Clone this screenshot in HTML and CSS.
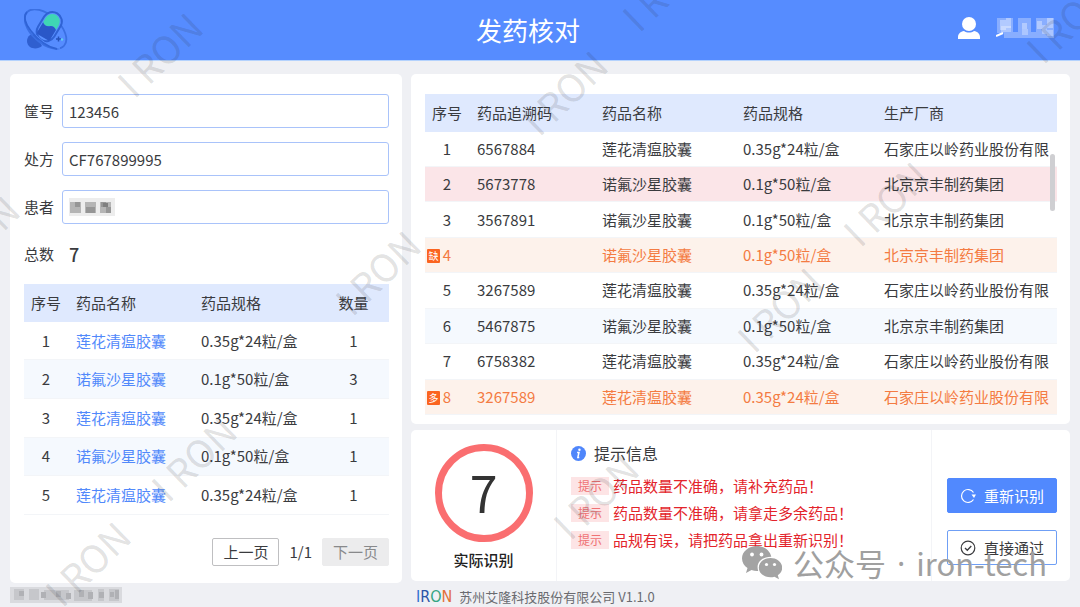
FILE: index.html
```html
<!DOCTYPE html>
<html lang="zh-CN">
<head>
<meta charset="utf-8">
<title>发药核对</title>
<link rel="stylesheet" href="styles.css">
</head>
<body>
<header class="topbar">
  <div class="brand">
    <svg class="brand-icon" viewBox="24 8 44 42" aria-hidden="true">
      <path d="M30 34c-4 3-4 9 0 12 4 2.500 9 1.500 12-1l-7-12z" fill="#2f5fd0"/>
      <ellipse cx="45.500" cy="28" rx="25" ry="14" transform="rotate(42 45.500 28)" fill="none" stroke="#3a6fe2" stroke-width="1.800"/>
      <g transform="rotate(31 49 26)">
        <rect x="38.500" y="9" width="21" height="33" rx="10.500" fill="#2f62d4"/>
        <rect x="40.500" y="11" width="17" height="29" rx="8.500" fill="#5a90ff"/>
        <path d="M41.500 25v-5.500a7.500 7.500 0 0 1 15 0V25q-4-3-7.500 0t-7.500 0z" fill="#3fd6b4"/>
        <path d="M41.500 25q4 3 7.500 0t7.500 0v11q0 2-2 2h-11q-2 0-2-2z" fill="#2a57c8"/>
      </g>
      <path d="M26 19c2 8 8 15 15 20 6 5 13 8 19 8" fill="none" stroke="#5a90ff" stroke-width="1.500"/>
      <path d="M27 11c-4 4-2 12 4 19 7 9 17 16 26 18" fill="none" stroke="#2f63d6" stroke-width="1.800"/>
      <path d="M58.500 35.500v5M56 38h5" stroke="#2450b8" stroke-width="1.500"/>
      <circle cx="62" cy="38.500" r="1.200" fill="#5fd0f0"/>
    </svg>
  </div>
  <h1 class="title">发药核对</h1>
  <div class="user">
    <svg class="user-icon" viewBox="0 0 22 22" aria-hidden="true"><circle cx="11" cy="7" r="7" fill="#fff"/><path d="M0 22v-2c0-3 2.500-5.500 6-6 3 2 7 2 10 0 3.500.5 6 3 6 6v2z" fill="#fff"/></svg>
    <svg class="user-mask" viewBox="0 0 60 22" aria-hidden="true">
      <path d="M0 19l7-3" stroke="#fff" stroke-width="2"/>
      <g fill="#fff">
        <path opacity=".3" d="M1 1h16v15H1zM22 1h13v18H22zM40 1h18v20H8v-6h32z"/>
        <path opacity=".35" d="M4 3h6v10H4zM10 1h5v10h-5zM26 6h5v6h-5zM41 4h5v8h-5zM51 1h6v10h-6z"/>
        <path opacity=".3" d="M5 9h10v6H5zM26 12h6v6h-6zM46 8h5v9h-5zM51 13h6v6h-6z"/>
      </g>
    </svg>
  </div>
</header>

<main class="layout">
  <section class="card order">
    <div class="field"><label for="basket">筐号</label><input id="basket" type="text" value="123456"></div>
    <div class="field"><label for="rx">处方</label><input id="rx" type="text" value="CF767899995"></div>
    <div class="field">
      <label for="patient">患者</label><input id="patient" type="text">
      <svg class="patient-mask" viewBox="0 0 48 20" aria-hidden="true">
        <path fill="#ededed" d="M0 0h46v18H0z"/>
        <path fill="#b5b5b5" d="M1 4h11v11H1zM16 4h11v11H16zM31 4h11v11H31z"/>
        <path fill="#969696" d="M6 4h5v5H6zM17 9h9v6h-9zM32 4h5v5h-5zM37 9h5v6h-5z"/>
        <path fill="#7f7f7f" d="M34 5h5v4h-5z"/>
      </svg>
    </div>
    <div class="field total"><span>总数</span><strong>7</strong></div>

    <table class="grid order-grid">
      <colgroup><col class="c-no"><col class="c-code"><col class="c-code"><col></colgroup>
      <thead><tr><th class="mid">序号</th><th>药品名称</th><th>药品规格</th><th class="mid">数量</th></tr></thead>
      <tbody>
        <tr><td class="mid">1</td><td><a href="#">莲花清瘟胶囊</a></td><td>0.35g*24粒/盒</td><td class="mid">1</td></tr>
        <tr class="alt"><td class="mid">2</td><td><a href="#">诺氟沙星胶囊</a></td><td>0.1g*50粒/盒</td><td class="mid">3</td></tr>
        <tr><td class="mid">3</td><td><a href="#">莲花清瘟胶囊</a></td><td>0.35g*24粒/盒</td><td class="mid">1</td></tr>
        <tr class="alt"><td class="mid">4</td><td><a href="#">诺氟沙星胶囊</a></td><td>0.1g*50粒/盒</td><td class="mid">1</td></tr>
        <tr><td class="mid">5</td><td><a href="#">莲花清瘟胶囊</a></td><td>0.35g*24粒/盒</td><td class="mid">1</td></tr>
      </tbody>
    </table>
    <nav class="pager"><button type="button">上一页</button><span>1/1</span><button type="button" disabled>下一页</button></nav>
  </section>

  <div class="right">
    <section class="card scan">
      <table class="grid scan-grid">
        <colgroup><col class="c-no"><col class="c-code"><col class="c-name"><col class="c-name"><col></colgroup>
        <thead><tr><th class="mid">序号</th><th>药品追溯码</th><th>药品名称</th><th>药品规格</th><th>生产厂商</th></tr></thead>
        <tbody>
          <tr><td class="mid">1</td><td>6567884</td><td>莲花清瘟胶囊</td><td>0.35g*24粒/盒</td><td>石家庄以岭药业股份有限</td></tr>
          <tr class="error"><td class="mid">2</td><td>5673778</td><td>诺氟沙星胶囊</td><td>0.1g*50粒/盒</td><td>北京京丰制药集团</td></tr>
          <tr><td class="mid">3</td><td>3567891</td><td>诺氟沙星胶囊</td><td>0.1g*50粒/盒</td><td>北京京丰制药集团</td></tr>
          <tr class="warn"><td class="mid"><span class="badge">缺</span>4</td><td></td><td>诺氟沙星胶囊</td><td>0.1g*50粒/盒</td><td>北京京丰制药集团</td></tr>
          <tr><td class="mid">5</td><td>3267589</td><td>莲花清瘟胶囊</td><td>0.35g*24粒/盒</td><td>石家庄以岭药业股份有限</td></tr>
          <tr class="alt"><td class="mid">6</td><td>5467875</td><td>诺氟沙星胶囊</td><td>0.1g*50粒/盒</td><td>北京京丰制药集团</td></tr>
          <tr><td class="mid">7</td><td>6758382</td><td>莲花清瘟胶囊</td><td>0.35g*24粒/盒</td><td>石家庄以岭药业股份有限</td></tr>
          <tr class="warn"><td class="mid"><span class="badge">多</span>8</td><td>3267589</td><td>莲花清瘟胶囊</td><td>0.35g*24粒/盒</td><td>石家庄以岭药业股份有限</td></tr>
        </tbody>
      </table>
      <div class="scrollbar"></div>
    </section>

    <section class="card result">
      <div class="count"><div class="ring">7</div><div class="count-label">实际识别</div></div>
      <div class="tips">
        <h2><svg class="info-icon" viewBox="0 0 16 16" aria-hidden="true"><circle cx="8" cy="8" r="8" fill="#4f86fb"/><circle cx="9" cy="4" r="1.300" fill="#fff"/><path d="M6.500 6.800h2L7.300 12.200h1.500" fill="none" stroke="#fff" stroke-width="1.600"/></svg>提示信息</h2>
        <ul>
          <li><span class="tag">提示</span>药品数量不准确，请补充药品！</li>
          <li><span class="tag">提示</span>药品数量不准确，请拿走多余药品！</li>
          <li><span class="tag">提示</span>品规有误，请把药品拿出重新识别！</li>
        </ul>
      </div>
      <div class="actions">
        <button type="button" class="primary"><svg viewBox="0 0 16 16" aria-hidden="true"><path d="M13.500 4.500A6.500 6.500 0 1 0 13.500 11.500" fill="none" stroke="currentColor" stroke-width="1.200"/><path d="M11.500 6.500h4.500l-2 3.500z" fill="currentColor"/></svg>重新识别</button>
        <button type="button"><svg viewBox="0 0 16 16" aria-hidden="true"><circle cx="8" cy="8" r="6.800" fill="none" stroke="currentColor" stroke-width="1.200"/><path d="M5 8l2.300 2.300L11.300 6" fill="none" stroke="currentColor" stroke-width="1.300"/></svg>直接通过</button>
      </div>
    </section>
  </div>
</main>

<footer class="footer">
  <div class="foot-left">
    <svg class="foot-mask" viewBox="0 0 112 18" aria-hidden="true">
      <path fill="#d9dade" d="M0 1h112v16H0z"/>
      <path fill="#c6c7cb" d="M4 3h10v11H4zM19 3h10v11H19zM34 4h25v10H34zM64 4h18v11H64zM88 3h6v12h-6zM99 3h10v12H99z"/>
      <path fill="#b0b1b5" d="M9 5h5v5H9zM31 6h5v6h-5zM46 5h5v6h-5zM56 7h5v6h-5zM69 4h5v7h-5zM78 6h5v7h-5zM89 6h5v6h-5zM100 6h4v5h-4zM105 4h4v9h-4z"/>
    </svg>
  </div>
  <div class="company"><span class="logo-text"><span class="l-i">I</span><span class="l-r">R</span><span class="l-o">O</span><span class="l-n">N</span></span><span>苏州艾隆科技股份有限公司 V1.1.0</span></div>
</footer>

<div class="marks" aria-hidden="true">
  <span class="mark m1">I RON</span><span class="mark m2">I RON</span><span class="mark m3">I RON</span><span class="mark m4">I RON</span>
  <span class="mark m5">I RON</span><span class="mark m6">I RON</span><span class="mark m7">I RON</span><span class="mark m8">I RON</span>
  <span class="mark m9">I RON</span><span class="mark m10">I RON</span><span class="mark m11">I RON</span>
</div>
<div class="channel">
  <svg viewBox="0 0 40 34" aria-hidden="true">
    <path fill="#a3a3a3" d="M15 0C6.700 0 0 5.500 0 12.500c0 4 2.200 7.300 5.500 9.600L4 27l5.500-3c1.800.6 3.600.9 5.500.9h1.200C13.500 17 20 10.500 29.300 10.700 28 4.500 22 0 15 0z"/>
    <path fill="#a3a3a3" d="M28.500 12C22 12 16.800 16.300 16.800 21.700S22 31.300 28.500 31.300c1.400 0 2.800-.2 4-.6l4.500 2.500-1.200-4c2.700-1.800 4.400-4.500 4.400-7.500C40.200 16.300 35 12 28.500 12z"/>
    <g fill="#fff"><circle cx="10" cy="8.500" r="1.900"/><circle cx="19.500" cy="8.500" r="1.900"/><circle cx="24.500" cy="18.500" r="1.600"/><circle cx="32.500" cy="18.500" r="1.600"/></g>
  </svg>
  <span>公众号</span><span class="dot">·</span><span>iron-tech</span>
</div>
</body>
</html>
```
FILE: styles.css
```css
* { box-sizing: border-box; }

body {
  margin: 0;
  min-height: 100vh;
  display: flex;
  flex-direction: column;
  position: relative;
  overflow: hidden;
  background: #eff0f4;
  color: #3a3b3e;
  font: 15px/20px "Noto Sans CJK SC", "Noto Sans", sans-serif;
}

button, input { font: inherit; color: inherit; }
a { color: #5189fb; text-decoration: none; }

.topbar {
  display: grid;
  grid-template-columns: 1fr auto 1fr;
  align-items: center;
  height: 61px;
  padding-right: 24px;
  background: #568cff;
  border-bottom: 1px solid #b4d2fd;
  color: #fff;
}
.brand { padding-left: 24px; }
.brand-icon { display: block; width: 44px; height: 42px; }
.title { margin: 0; font-size: 26px; line-height: 36px; font-weight: 400; }
.user { display: flex; justify-content: flex-end; align-items: center; gap: 16px; padding-bottom: 4px; }
.user-icon { width: 22px; height: 22px; }
.user-mask { width: 60px; height: 22px; }

.layout {
  flex: 1;
  display: grid;
  grid-template-columns: 392fr 659fr;
  gap: 9px;
  padding: 13px 10px 0;
}
.card { background: #fff; border-radius: 5px; }

.order { padding: 20px 13px 16px 14px; }
.field { position: relative; display: flex; align-items: center; height: 34px; margin-bottom: 14px; }
.field label, .field span { width: 38px; }
.field input {
  flex: 1;
  min-width: 0;
  height: 34px;
  padding: 0 6px;
  border: 1px solid #a9c3fa;
  border-radius: 3px;
  background: #fff;
}
.patient-mask { position: absolute; left: 45px; top: 8px; width: 48px; height: 20px; }
.total { height: 32px; }
.total strong { padding-left: 7px; font-size: 18px; font-weight: 500; }

.grid { width: 100%; table-layout: fixed; border-collapse: collapse; }
.grid th, .grid td {
  padding: 0 0 0 8px;
  text-align: left;
  font-weight: 400;
  white-space: nowrap;
  position: relative;
}
.grid .mid { padding: 0; text-align: center; }
.grid th { height: 38px; background: #dfe9fe; }
.grid td { border-bottom: 1px solid #f3f5f8; }
.c-no { width: 44px; }
.c-code { width: 125px; }
.c-name { width: 141px; }
.order-grid { height: 231px; }
.alt { background: #f5f9fe; }
.error { background: #fbe5e8; }
.warn { background: #fdf2eb; color: #f47b42; }
.badge {
  position: absolute;
  left: 2px;
  top: 11px;
  width: 13px;
  height: 14px;
  border-radius: 1px;
  background: #fb6420;
  color: #fff;
  font-size: 10px;
  line-height: 14px;
}

.pager { display: flex; justify-content: flex-end; align-items: center; gap: 10px; margin-top: 23px; }
.pager button {
  width: 67px;
  height: 28px;
  padding: 0;
  border: 1px solid #bfbfc1;
  border-radius: 2px;
  background: #fff;
}
.pager button:disabled { border-color: #ececed; background: #ececed; color: #88898b; }

.right { display: flex; flex-direction: column; gap: 6px; padding-bottom: 2px; }
.scan { flex: 1; position: relative; padding: 20px 13px 9px 14px; }
.scan-grid { height: 100%; }
.scrollbar {
  position: absolute;
  right: 15px;
  top: 80px;
  width: 5px;
  height: 57px;
  border-radius: 3px;
  background: #cfcfd2;
}

.result { display: grid; grid-template-columns: 145px 1fr 138px; height: 151px; }
.count { display: flex; flex-direction: column; align-items: center; padding-top: 14px; }
.ring {
  width: 98px;
  height: 98px;
  border: 7px solid #fa6e70;
  border-radius: 50%;
  text-align: center;
  font-size: 50px;
  line-height: 80px;
  color: #333;
}
.count-label { margin-top: 8px; font-weight: 500; color: #222; }
.tips { padding: 13px 0 0 14px; border-left: 1px solid #f3f4f7; border-right: 1px solid #f3f4f7; }
.tips h2 { display: flex; align-items: center; gap: 8px; margin: 0; font-size: 16px; line-height: 20px; font-weight: 400; }
.info-icon { width: 15px; height: 15px; }
.tips ul { margin: 9px 0 0; padding: 0; list-style: none; }
.tips li { display: flex; align-items: center; gap: 4px; height: 27px; color: #e3242b; white-space: nowrap; }
.tag { width: 38px; background: #fde4e5; color: #ef7274; font-size: 12px; line-height: 18px; text-align: center; }

.actions { display: flex; flex-direction: column; gap: 17px; padding: 48px 13px 0 15px; }
.actions button {
  display: flex;
  align-items: center;
  justify-content: center;
  gap: 8px;
  height: 35px;
  padding: 0;
  border: 1px solid #6f9ff5;
  border-radius: 2px;
  background: #fff;
}
.actions svg { width: 16px; height: 16px; }
.actions .primary { background: #5189fe; border-color: #5189fe; color: #fff; }

.footer {
  display: grid;
  grid-template-columns: 392fr 659fr;
  gap: 9px;
  height: 24px;
  padding: 0 10px;
  align-items: center;
}
.foot-mask { display: block; width: 112px; height: 18px; }
.company { display: flex; align-items: center; gap: 7px; padding: 3px 0 0 5px; font-size: 13px; color: #6a6b70; }
.logo-text { font: 16px/20px "DejaVu Sans Condensed", "DejaVu Sans", sans-serif; }
.l-i { color: #2f6fd0; }
.l-r { color: #2c55a8; }
.l-o { color: #35a583; }
.l-n { color: #e2703a; }

.marks { position: absolute; inset: 0; overflow: hidden; pointer-events: none; }
.mark {
  position: absolute;
  width: 120px;
  margin: -20px 0 0 -60px;
  text-align: center;
  white-space: nowrap;
  font-size: 38px;
  line-height: 40px;
  font-weight: 400;
  color: rgba(40, 40, 45, 0.14);
  transform: rotate(-44deg);
}
.m1 { left: 159px; top: 54px; }
.m2 { left: 664px; top: -12px; }
.m3 { left: 564px; top: 92px; }
.m4 { left: 1068px; top: 20px; }
.m5 { left: -24px; top: 237px; }
.m6 { left: 377px; top: 272px; }
.m7 { left: 885px; top: 203px; }
.m8 { left: 779px; top: 309px; }
.m9 { left: 193px; top: 458px; }
.m10 { left: 87px; top: 563px; }
.m11 { left: 595px; top: 496px; }

.channel {
  position: absolute;
  right: 33px;
  bottom: 24px;
  display: flex;
  align-items: center;
  gap: 11px;
  font-size: 31px;
  line-height: 40px;
  font-weight: 400;
  color: #a0a0a0;
  pointer-events: none;
}
.channel svg { width: 40px; height: 34px; }
.dot { font-family: "Noto Sans", sans-serif; }
```
